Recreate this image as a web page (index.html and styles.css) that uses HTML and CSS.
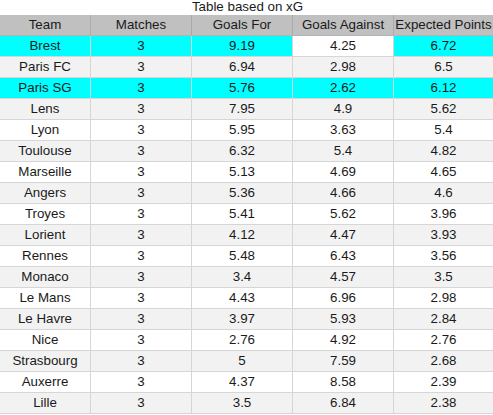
FILE: index.html
```html
<!DOCTYPE html>
<html>
<head>
<meta charset="utf-8">
<link rel="stylesheet" href="styles.css">
</head>
<body>
<div class="title">Table based on xG</div>
<table class="xg">
<colgroup><col class="c-team"><col class="c-num"><col class="c-num"><col class="c-num"><col class="c-last"></colgroup>
<thead>
<tr><th>Team</th><th>Matches</th><th>Goals For</th><th>Goals Against</th><th>Expected Points</th></tr>
</thead>
<tbody>
<tr class="hl"><td>Brest</td><td>3</td><td>9.19</td><td class="plain">4.25</td><td>6.72</td></tr>
<tr><td>Paris FC</td><td>3</td><td>6.94</td><td>2.98</td><td>6.5</td></tr>
<tr class="hl"><td>Paris SG</td><td>3</td><td>5.76</td><td>2.62</td><td>6.12</td></tr>
<tr><td>Lens</td><td>3</td><td>7.95</td><td>4.9</td><td>5.62</td></tr>
<tr><td>Lyon</td><td>3</td><td>5.95</td><td>3.63</td><td>5.4</td></tr>
<tr><td>Toulouse</td><td>3</td><td>6.32</td><td>5.4</td><td>4.82</td></tr>
<tr><td>Marseille</td><td>3</td><td>5.13</td><td>4.69</td><td>4.65</td></tr>
<tr><td>Angers</td><td>3</td><td>5.36</td><td>4.66</td><td>4.6</td></tr>
<tr><td>Troyes</td><td>3</td><td>5.41</td><td>5.62</td><td>3.96</td></tr>
<tr><td>Lorient</td><td>3</td><td>4.12</td><td>4.47</td><td>3.93</td></tr>
<tr><td>Rennes</td><td>3</td><td>5.48</td><td>6.43</td><td>3.56</td></tr>
<tr><td>Monaco</td><td>3</td><td>3.4</td><td>4.57</td><td>3.5</td></tr>
<tr><td>Le Mans</td><td>3</td><td>4.43</td><td>6.96</td><td>2.98</td></tr>
<tr><td>Le Havre</td><td>3</td><td>3.97</td><td>5.93</td><td>2.84</td></tr>
<tr><td>Nice</td><td>3</td><td>2.76</td><td>4.92</td><td>2.76</td></tr>
<tr><td>Strasbourg</td><td>3</td><td>5</td><td>7.59</td><td>2.68</td></tr>
<tr><td>Auxerre</td><td>3</td><td>4.37</td><td>8.58</td><td>2.39</td></tr>
<tr><td>Lille</td><td>3</td><td>3.5</td><td>6.84</td><td>2.38</td></tr>
</tbody>
</table>
</body>
</html>
```
FILE: styles.css
```css
html, body {
  margin: 0;
  padding: 0;
  background: #ffffff;
}
body {
  font-family: "Liberation Sans", Arial, sans-serif;
  font-size: 13.33px;
  color: #1a1a1a;
  width: 493px;
  overflow: hidden;
}
.title {
  height: 15px;
  line-height: 14px;
  text-align: center;
  padding-left: 2px;
}
.xg {
  border-collapse: separate;
  border-spacing: 0;
  table-layout: fixed;
  width: 494px;
}
.c-team { width: 91px; }
.c-num { width: 101px; }
.c-last { width: 100px; }
.xg th, .xg td {
  box-sizing: border-box;
  padding: 0;
  text-align: center;
  vertical-align: middle;
  border-right: 1px solid #d6d6d6;
  border-bottom: 1px solid #d6d6d6;
  line-height: 20px;
  white-space: nowrap;
  overflow: hidden;
}
.xg th {
  font-weight: normal;
  background: #c0c0c0;
  border-right-color: #aaaaaa;
  border-bottom-color: #b4b4b4;
}
.xg tbody tr:nth-child(even) td { background: #f2f2f2; }
.xg tbody tr.hl td { background: #00ffff; }
.xg tbody tr.hl td.plain { background: #ffffff; }
```
